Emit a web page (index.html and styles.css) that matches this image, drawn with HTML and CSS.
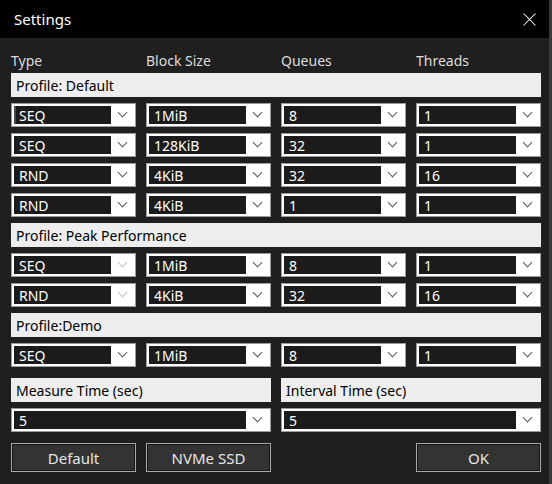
FILE: index.html
```html
<!DOCTYPE html>
<html lang="en">
<head>
    <meta charset="UTF-8">
    <meta name="viewport" content="width=device-width, initial-scale=1.0">
    <title>Settings</title>
    <link rel="stylesheet" href="styles.css">
</head>
<body>
    <div class="window">
        <header class="titlebar">
            <span class="title">Settings</span>
            <span class="close"></span>
        </header>

        <div class="content">
            <div class="heads">
                <span>Type</span>
                <span>Block Size</span>
                <span>Queues</span>
                <span>Threads</span>
            </div>

            <div class="grid">
                <div class="profile">Profile: Default</div>

                <div class="combo focus"><span class="val">SEQ</span><span class="arrow"></span></div>
                <div class="combo"><span class="val">1MiB</span><span class="arrow"></span></div>
                <div class="combo"><span class="val">8</span><span class="arrow"></span></div>
                <div class="combo"><span class="val">1</span><span class="arrow"></span></div>

                <div class="combo"><span class="val">SEQ</span><span class="arrow"></span></div>
                <div class="combo"><span class="val">128KiB</span><span class="arrow"></span></div>
                <div class="combo"><span class="val">32</span><span class="arrow"></span></div>
                <div class="combo"><span class="val">1</span><span class="arrow"></span></div>

                <div class="combo"><span class="val">RND</span><span class="arrow"></span></div>
                <div class="combo"><span class="val">4KiB</span><span class="arrow"></span></div>
                <div class="combo"><span class="val">32</span><span class="arrow"></span></div>
                <div class="combo"><span class="val">16</span><span class="arrow"></span></div>

                <div class="combo"><span class="val">RND</span><span class="arrow"></span></div>
                <div class="combo"><span class="val">4KiB</span><span class="arrow"></span></div>
                <div class="combo"><span class="val">1</span><span class="arrow"></span></div>
                <div class="combo"><span class="val">1</span><span class="arrow"></span></div>

                <div class="profile">Profile: Peak Performance</div>

                <div class="combo locked"><span class="val">SEQ</span><span class="arrow"></span></div>
                <div class="combo"><span class="val">1MiB</span><span class="arrow"></span></div>
                <div class="combo"><span class="val">8</span><span class="arrow"></span></div>
                <div class="combo"><span class="val">1</span><span class="arrow"></span></div>

                <div class="combo locked"><span class="val">RND</span><span class="arrow"></span></div>
                <div class="combo"><span class="val">4KiB</span><span class="arrow"></span></div>
                <div class="combo"><span class="val">32</span><span class="arrow"></span></div>
                <div class="combo"><span class="val">16</span><span class="arrow"></span></div>

                <div class="profile">Profile:Demo</div>

                <div class="combo"><span class="val">SEQ</span><span class="arrow"></span></div>
                <div class="combo"><span class="val">1MiB</span><span class="arrow"></span></div>
                <div class="combo"><span class="val">8</span><span class="arrow"></span></div>
                <div class="combo"><span class="val">1</span><span class="arrow"></span></div>
            </div>

            <div class="grid times">
                <div class="profile half">Measure Time (sec)</div>
                <div class="profile half">Interval Time (sec)</div>
                <div class="combo half"><span class="val">5</span><span class="arrow"></span></div>
                <div class="combo half"><span class="val">5</span><span class="arrow"></span></div>
            </div>

            <div class="grid buttons">
                <button>Default</button>
                <button>NVMe SSD</button>
                <button class="ok">OK</button>
            </div>
        </div>
    </div>
</body>
</html>
```

FILE: styles.css
```css
* {
    margin: 0;
    padding: 0;
    box-sizing: border-box;
}

body {
    font-family: 'Noto Sans', 'Open Sans', sans-serif;
    font-size: 14px;
    background-color: #1f1f1f;
    color: #e6e6e6;
    width: 552px;
    height: 484px;
    overflow: hidden;
}

.window {
    height: 484px;
    border-right: 3px solid #3a3a3a;
}

.titlebar {
    height: 38px;
    background-color: #000;
    color: #fff;
    display: flex;
    align-items: center;
    justify-content: space-between;
    padding: 0 13px 0 14px;
}

.title {
    font-size: 15px;
}

.close {
    position: relative;
    width: 13px;
    height: 13px;
}

.close::before,
.close::after {
    content: '';
    position: absolute;
    left: 6px;
    top: -2px;
    width: 1px;
    height: 17px;
    background-color: #fff;
    transform: rotate(45deg);
}

.close::after {
    transform: rotate(-45deg);
}

.content {
    padding: 0 8px 0 11px;
}

.heads {
    display: grid;
    grid-template-columns: repeat(4, 125px);
    column-gap: 10px;
    height: 35px;
    align-items: end;
    padding-bottom: 2px;
    line-height: 20px;
    color: #dcdcdc;
}

.grid {
    display: grid;
    grid-template-columns: repeat(4, 125px);
    column-gap: 10px;
    row-gap: 6px;
}

.profile {
    grid-column: 1 / -1;
    height: 24px;
    line-height: 26px;
    background-color: #eeeeee;
    color: #000;
    padding-left: 5px;
}

.half {
    grid-column: span 2;
}

.combo {
    height: 24px;
    display: flex;
    background-color: #fff;
    border: 1px solid #9b9b9b;
    padding: 2px;
}

.combo .val {
    flex: 1;
    background-color: #1b1b1b;
    color: #fff;
    line-height: 19px;
    padding-left: 5px;
}

.combo.focus .val {
    box-shadow: inset 2px 0 0 #4a4a4a;
}

.combo .arrow {
    width: 22px;
    position: relative;
}

.combo .arrow::after {
    content: '';
    position: absolute;
    left: 8px;
    top: 3px;
    width: 6px;
    height: 6px;
    border-right: 1px solid #5a5a5a;
    border-bottom: 1px solid #5a5a5a;
    transform: rotate(45deg);
}

.combo.locked .arrow::after {
    border-color: #c4c4c4;
}

.times {
    margin-top: 11px;
}

.buttons {
    margin-top: 11px;
}

button {
    height: 29px;
    background-color: #333;
    color: #e6e6e6;
    border: 1px solid #a8a8a8;
    box-shadow: inset 0 0 0 1px #161616;
    font-family: inherit;
    font-size: 15px;
}

.ok {
    grid-column: 4;
}
```
